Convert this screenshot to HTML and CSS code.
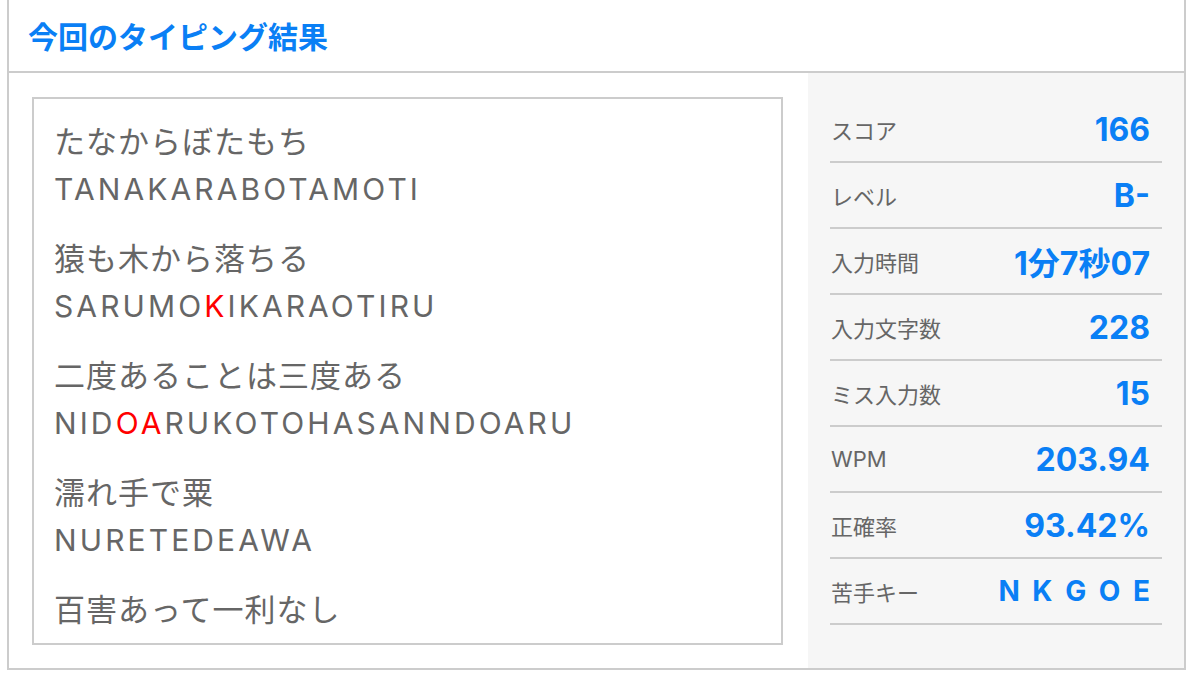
FILE: index.html
```html
<!DOCTYPE html>
<html lang="ja">
<head>
<meta charset="utf-8">
<title>今回のタイピング結果</title>
<link rel="stylesheet" href="styles.css">
</head>
<body>
<div class="result">
  <div class="result-head">
    <h2 class="result-title">今回のタイピング結果</h2>
  </div>
  <div class="result-body">
    <div class="words-wrap">
      <div class="words">
        <div class="word">
          <div class="kana">たなからぼたもち</div>
          <div class="roma">TANAKARABOTAMOTI</div>
        </div>
        <div class="word">
          <div class="kana">猿も木から落ちる</div>
          <div class="roma">SARUMO<span class="miss">K</span>IKARAOTIRU</div>
        </div>
        <div class="word">
          <div class="kana">二度あることは三度ある</div>
          <div class="roma">NID<span class="miss">OA</span>RUKOTOHASANNDOARU</div>
        </div>
        <div class="word">
          <div class="kana">濡れ手で粟</div>
          <div class="roma">NURETEDEAWA</div>
        </div>
        <div class="word">
          <div class="kana">百害あって一利なし</div>
        </div>
      </div>
    </div>
    <div class="stats">
      <div class="stat"><span class="stat-label">スコア</span><span class="stat-value">166</span></div>
      <div class="stat"><span class="stat-label">レベル</span><span class="stat-value">B-</span></div>
      <div class="stat"><span class="stat-label">入力時間</span><span class="stat-value">1分7秒07</span></div>
      <div class="stat"><span class="stat-label">入力文字数</span><span class="stat-value">228</span></div>
      <div class="stat"><span class="stat-label">ミス入力数</span><span class="stat-value">15</span></div>
      <div class="stat"><span class="stat-label">WPM</span><span class="stat-value">203.94</span></div>
      <div class="stat"><span class="stat-label">正確率</span><span class="stat-value">93.42%</span></div>
      <div class="stat"><span class="stat-label">苦手キー</span><span class="stat-value keys">N K G O E</span></div>
    </div>
  </div>
</div>
</body>
</html>
```
FILE: styles.css
```css
html, body {
  margin: 0;
  padding: 0;
  background: #fff;
}
body {
  font-family: "Inter", "Noto Sans CJK JP", sans-serif;
  color: #666;
}
.result {
  margin-left: 7px;
  width: 1175px;
  border: 2px solid #ccc;
  border-top: none;
}
.result-head {
  height: 71px;
  border-bottom: 2px solid #ccc;
  display: flex;
  align-items: center;
  padding-left: 19px;
}
.result-title {
  margin: 0;
  font-family: "Noto Sans CJK JP", sans-serif;
  font-weight: 700;
  font-size: 30px;
  line-height: 1;
  color: #0a7ff5;
  padding-bottom: 2px;
}
.result-body {
  display: flex;
  height: 595px;
}
.words-wrap {
  flex: 1;
  padding: 24px 25px 23px 23px;
}
.words {
  box-sizing: border-box;
  height: 548px;
  border: 2px solid #ccc;
  overflow: hidden;
  padding: 17px 20px 0 20px;
}
.word {
  margin-bottom: 20px;
}
.kana {
  font-family: "Noto Sans CJK JP", sans-serif;
  font-size: 31px;
  line-height: 47px;
  letter-spacing: 1px;
}
.roma {
  font-size: 30px;
  line-height: 47px;
  letter-spacing: 3.1px;
  margin-top: 3px;
}
.miss {
  color: #ff0000;
}
.stats {
  width: 332px;
  background: #f6f6f6;
  padding: 24px 22px;
}
.stat {
  height: 64px;
  border-bottom: 2px solid #ccc;
  display: flex;
  align-items: center;
  justify-content: space-between;
  padding: 0 12px 0 1px;
}
.stat-label {
  font-size: 22px;
  color: #666;
}
.stat-value {
  font-weight: 700;
  font-size: 32px;
  color: #0a7ff5;
}
.stat-value.keys {
  font-size: 28px;
  word-spacing: 6px;
}
```
